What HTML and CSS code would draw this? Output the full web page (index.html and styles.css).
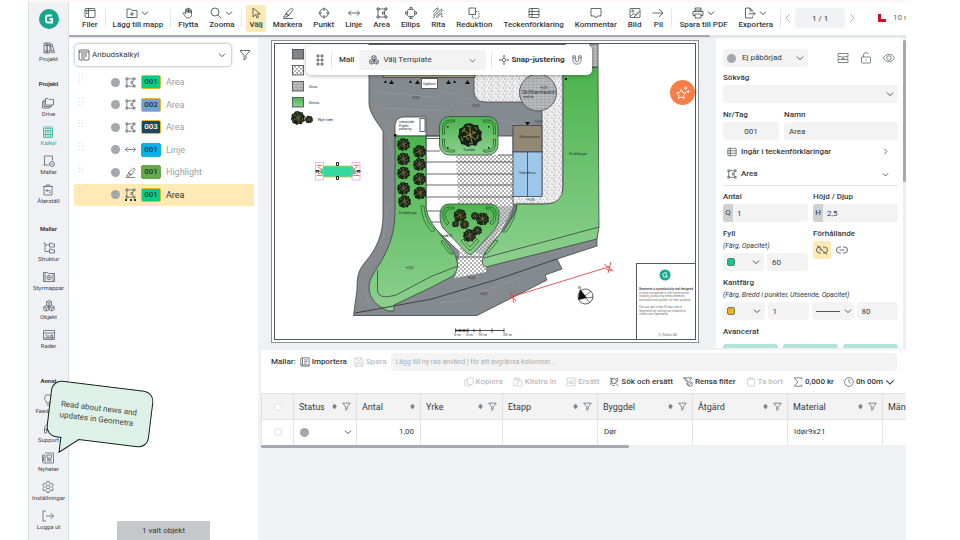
FILE: index.html
```html
<!DOCTYPE html>
<html lang="sv">
<head>
<meta charset="utf-8">
<meta name="viewport" content="width=device-width, initial-scale=1">
<title>Geometra – Anbudskalkyl</title>
<link rel="stylesheet" href="styles.css">
</head>
<body>
<svg class="sprite" aria-hidden="true">
  <symbol id="i-chev" viewBox="0 0 12 12"><path d="M1.500 4 6 8.500 10.500 4"/></symbol>
  <symbol id="i-right" viewBox="0 0 12 12"><path d="M4 1.500 8.500 6 4 10.500"/></symbol>
  <symbol id="i-left" viewBox="0 0 12 12"><path d="M8 1.500 3.500 6 8 10.500"/></symbol>
  <symbol id="i-filer" viewBox="0 0 24 24"><rect x="2" y="3" width="20" height="18" rx="2"/><path d="M9 3v18M2 7h20M4 10h3M4 13h3"/></symbol>
  <symbol id="i-addfolder" viewBox="0 0 24 24"><path d="M2 21V4h7l3 3h10v14zM12 10v8M8 14h8"/></symbol>
  <symbol id="i-hand" viewBox="0 0 24 24"><path d="M7 13V5.500a1.500 1.500 0 0 1 3 0V11 3.500a1.500 1.500 0 0 1 3 0V11 4.500a1.500 1.500 0 0 1 3 0V12 7a1.500 1.500 0 0 1 3 0v8c0 4-2.500 7-6.500 7S7 20 5.500 17.500L2.500 13c-.5-2 1.500-2.500 2.500-1.500z"/></symbol>
  <symbol id="i-search" viewBox="0 0 24 24"><circle cx="10" cy="10" r="8"/><path d="m16 16 7 7"/></symbol>
  <symbol id="i-cursor" viewBox="0 0 24 24"><path d="M6 2v18l5-5 3 7 3-1.500-3-6.500h6.500z"/></symbol>
  <symbol id="i-marker" viewBox="0 0 24 24"><path d="M9 16 8 12 19 2l3 3-8 12-4-1zM8 12l6 5M8 14l-5 6h7l2-3M2 23h20"/></symbol>
  <symbol id="i-target" viewBox="0 0 24 24"><circle cx="12" cy="12" r="8.500"/><path d="M12 1v7M12 16v7M1 12h7M16 12h7"/></symbol>
  <symbol id="i-line" viewBox="0 0 24 24"><path d="M1 12h22M6 7l-5 5 5 5M18 7l5 5-5 5"/></symbol>
  <symbol id="i-area" viewBox="0 0 24 24"><path d="M2 2h4v4H2zM18 2h4v4h-4zM2 18h4v4H2zM18 18h4v4h-4zM13 10h4v4h-4zM6 4h12M4 6v12M6 20h12M19 6l-3 4M16 14l3 4"/></symbol>
  <symbol id="i-ellipse" viewBox="0 0 24 24"><circle cx="12" cy="12" r="8.500"/><path class="knob" d="M10 1h4v4h-4zM10 19h4v4h-4zM1 10h4v4H1zM19 10h4v4h-4z"/></symbol>
  <symbol id="i-draw" viewBox="0 0 24 24"><path d="M2 10C8 3 13-1 12 4S2 14 4 17 18 1 20 5 8 17 9 20s6-4 8-6 4-2 3 1-2 5 2 5M2 22l4-3"/></symbol>
  <symbol id="i-reduce" viewBox="0 0 24 24"><path d="M2 2h13v13H2z"/><path stroke-dasharray="3 2" d="M15 9h7v13H9v-7"/></symbol>
  <symbol id="i-table" viewBox="0 0 24 24"><rect x="2" y="3" width="20" height="18" rx="2"/><path d="M2 9h20M2 15h20M8 3v18"/></symbol>
  <symbol id="i-comment" viewBox="0 0 24 24"><path d="M2 3h20v15h-7l-3 4-3-4H2z"/></symbol>
  <symbol id="i-image" viewBox="0 0 24 24"><rect x="2" y="3" width="20" height="18" rx="1"/><circle cx="7.500" cy="8" r="2"/><path d="m3 19 6-6 4 3 8-8M10 20l9-8"/></symbol>
  <symbol id="i-arrow" viewBox="0 0 24 24"><path d="M1 12h21M14 4l8 8-8 8"/></symbol>
  <symbol id="i-print" viewBox="0 0 24 24"><path d="M6 9V2h12v7M6 17H2V9h20v8h-4M6 14h12v8H6zM6 6h12"/></symbol>
  <symbol id="i-export" viewBox="0 0 24 24"><path d="M17 8V7l-5-5H3v20h14v-3M12 2v6h5M9 13.500h13M18 9.500l4 4-4 4"/></symbol>
  <symbol id="i-books" viewBox="0 0 24 24"><path d="M2 2h6v20H2zM8 2h6v20H8zM14 5l4-1 5 17-5 1zM2 7h12M4 4.500h2M10 4.500h2M2 18h12M15 9l4-1M17.500 18l4-1"/></symbol>
  <symbol id="i-drive" viewBox="0 0 24 24"><path d="M7 3h5l2 2h9v11H7zM7 6H4v13h15v-3M4 9H1v13h15v-3"/></symbol>
  <symbol id="i-calc" viewBox="0 0 24 24"><rect x="3" y="2" width="18" height="21" rx="1"/><path d="M6 5h12v4H6zM3 12h18M7 14v8M12 14v8M17 14v8M4 17h16"/></symbol>
  <symbol id="i-mall" viewBox="0 0 24 24"><path d="M12 20H1M3 20V2h16v9"/><circle cx="18" cy="18" r="5"/><path d="M15 18h6"/></symbol>
  <symbol id="i-restore" viewBox="0 0 24 24"><path d="M2 5h20M8 5V2h8v3M4 5v17h16V5M8 13h6a2.500 2.500 0 0 1 0 5M11 10l-3 3 3 3"/></symbol>
  <symbol id="i-tree" viewBox="0 0 24 24"><path d="M1 2h3v17h9M4 6h9M13 2h4l1 2h5v6H13zM13 14h4l1 2h5v6H13z"/></symbol>
  <symbol id="i-gearfolder" viewBox="0 0 24 24"><path d="M1 21V3h8l2 2h12v16zM4 3v18M20 5v16"/><circle cx="12" cy="13" r="4.500"/><circle cx="12" cy="13" r="1.500"/></symbol>
  <symbol id="i-cubes" viewBox="0 0 24 24"><path d="m12 1 5 2.500v6L12 12 7 9.500v-6zM6.500 11l5 2.500v6l-5 2.500-5-2.500v-6zM17.500 11l5 2.500v6l-5 2.500-5-2.500v-6zM7 3.500 12 6l5-2.500M12 6v6M1.500 13.500l5 2.500 5-2.500M6.500 16v6M12.500 13.500l5 2.500 5-2.500M17.500 16v6"/></symbol>
  <symbol id="i-rows" viewBox="0 0 24 24"><rect x="1" y="3" width="22" height="18" rx="1"/><path d="M1 8h22M5 12h3v6M12 12v6M16 12h3v6h-3zM1 18h22"/></symbol>
  <symbol id="i-bulb" viewBox="0 0 24 24"><path d="M9 18c0-4-4-5-4-10a7 7 0 0 1 14 0c0 5-4 6-4 10zM9 22h6"/></symbol>
  <symbol id="i-headset" viewBox="0 0 24 24"><path d="M3 15v-4a9 9 0 0 1 18 0v4M3 12h4v8H3zM17 12h4v8h-4z"/></symbol>
  <symbol id="i-news" viewBox="0 0 24 24"><path d="M6 2h17v20H4a3 3 0 0 1-3-3V6h5v14M10 6h9v6h-9zM10 15h9M10 18h9M3 9v9"/></symbol>
  <symbol id="i-gear" viewBox="0 0 24 24"><path d="m10 1-.8 3.200-2.700 1.500L3.400 4.800l-2 3.500L3.700 10.600v3L1.400 15.900l2 3.500 3.100-.9 2.700 1.500L10 23h4l.8-3 2.700-1.500 3.100.9 2-3.500-2.300-2.300v-3l2.300-2.300-2-3.500-3.100.9-2.700-1.500L14 1z"/><circle cx="12" cy="12" r="4"/></symbol>
  <symbol id="i-logout" viewBox="0 0 24 24"><path d="M8 2H2v20h6M8 12h15M17 6l6 6-6 6"/></symbol>
  <symbol id="i-sheet" viewBox="0 0 24 24"><rect x="2" y="2" width="20" height="20" rx="2"/><path d="M2 6h20M6 10h12M6 14h12M6 18h8"/></symbol>
  <symbol id="i-funnel" viewBox="0 0 24 24"><path d="M2 3h20l-8 10v6l-4 3v-9z"/></symbol>
  <symbol id="i-snap" viewBox="0 0 24 24"><circle cx="12" cy="12" r="4"/><path d="M12 1v7M12 16v7M1 12h7M16 12h7M9.500 3.500 12 1l2.500 2.500M9.500 20.500 12 23l2.500-2.500M3.500 9.500 1 12l2.500 2.500M20.500 9.500 23 12l-2.500 2.500"/></symbol>
  <symbol id="i-magnet" viewBox="0 0 24 24"><path d="M2 2h6v10a4 4 0 0 0 8 0V2h6v10a10 10 0 0 1-20 0zM2 7h6M16 7h6"/></symbol>
  <symbol id="i-star" viewBox="0 0 24 24"><path d="m10 7 2.300 5 5.200.7-3.900 3.700 1 5.400L10 19.200l-4.600 2.600 1-5.400-3.900-3.700 5.200-.7zM17 2v6M14 5h6M21 8v5M18.500 10.500h5"/></symbol>
  <symbol id="i-split" viewBox="0 0 24 24"><path d="M6 9H2V3h20v6h-4M6 15H2v6h20v-6h-4M1 12h4M8 12h8M19 12h4M12 8v8M6 9h3M15 9h3M6 15h12"/></symbol>
  <symbol id="i-lock" viewBox="0 0 24 24"><rect x="3" y="10" width="18" height="12" rx="1"/><path d="M7 10V6a5 5 0 0 1 9.500-2M12 15v3"/></symbol>
  <symbol id="i-eye" viewBox="0 0 24 24"><path d="M1 12C6 2 18 2 23 12 18 22 6 22 1 12z"/><circle cx="12" cy="12" r="4.500"/></symbol>
  <symbol id="i-link" viewBox="0 0 24 24"><path d="M10 6H7a6 6 0 0 0 0 12h3M14 6h3a6 6 0 0 1 0 12h-3M7 12h10"/></symbol>
  <symbol id="i-unlink" viewBox="0 0 24 24"><path d="M10 6H7a6 6 0 0 0 0 12h3M14 6h3a6 6 0 0 1 0 12h-3M2 3l20 18M7 12h4"/></symbol>
  <symbol id="i-book" viewBox="0 0 24 24"><path d="M4 2h18v20H4a3 3 0 0 1-2-3V4a2 2 0 0 1 2-2zM6 2v17M2 19h20M10 7h8M10 11h8M10 15h5"/></symbol>
  <symbol id="i-save" viewBox="0 0 24 24"><path d="M2 2h16l4 4v16H2zM7 2v6h9V2M6 22v-9h12v9M9 17h6"/></symbol>
  <symbol id="i-copy" viewBox="0 0 24 24"><rect x="8" y="2" width="14" height="16" rx="3"/><path d="M8 6H5a3 3 0 0 0-3 3v10a3 3 0 0 0 3 3h8a3 3 0 0 0 3-3v-1"/></symbol>
  <symbol id="i-paste" viewBox="0 0 24 24"><path d="M9 21H2V4h4M13 4h4v4M6 2h7v4H6z"/><rect x="10" y="9" width="12" height="13" rx="1"/></symbol>
  <symbol id="i-swap" viewBox="0 0 24 24"><path d="M5 3v14H2M17 3h4v9"/><circle cx="12" cy="10" r="6"/><path d="m16 15 7 7M2 3h8M7 20h7"/></symbol>
  <symbol id="i-clearf" viewBox="0 0 24 24"><path d="M10 20v-8L1 2h20l-6 7M4 2l8 8"/><circle cx="17" cy="17" r="5.500"/><path d="m13 21 8-8"/></symbol>
  <symbol id="i-trash" viewBox="0 0 24 24"><path d="M2 5h20M8 5V2h8v3M4 5v17h16V5"/></symbol>
  <symbol id="i-sum" viewBox="0 0 24 24"><path d="M21 6V2H3l9 10L3 22h18v-4"/></symbol>
  <symbol id="i-clock" viewBox="0 0 24 24"><circle cx="12" cy="12" r="10.500"/><path d="M12 5v7l4 3"/></symbol>
  <symbol id="i-sort" viewBox="0 0 12 12"><path class="solid" d="M6 0l4 5v2L6 12 2 7V5z"/></symbol>
  <symbol id="tree" viewBox="-12 -12 24 24">
    <path fill="#182019" d="M0-12 4-10 8-10 9-6 12-3 11 1 12 5 8 7 6 11 2 10-2 12-5 10-9 9-10 5-12 2-11-2-11-6-7-8-5-11z"/>
    <path fill="none" stroke="#4f8a3c" stroke-width="1.300" d="M-8-3l3-4M-3-9l4 1M5-8l2 3M8 0l-1 4M3 8l-4 1M-7 6l-2-4M-4 2l3 3M2-4l3 2"/>
    <path fill="none" stroke="#a78a3c" stroke-width="1" d="M0 0-6-5M0 0l6-3M0 0l2 7M0 0l-7 2M0 0v-7M0 0l6 5"/>
  </symbol>
</svg>

<div class="app">
  <nav class="side" aria-label="Huvudmeny">
    <a class="brand" href="#" aria-label="Geometra"><svg viewBox="0 0 20 20"><circle cx="10" cy="10" r="10"/><path d="M13 6.500H9A2 2 0 0 0 7 8.500v3a2 2 0 0 0 2 2h4V10H10.500"/></svg></a>
    <a class="nav" href="#"><svg><use href="#i-books"/></svg>Projekt</a>
    <h2>Projekt</h2>
    <a class="nav" href="#"><svg><use href="#i-drive"/></svg>Drive</a>
    <a class="nav on" href="#"><svg><use href="#i-calc"/></svg>Kalkyl</a>
    <a class="nav" href="#"><svg><use href="#i-mall"/></svg>Mallar</a>
    <a class="nav" href="#"><svg><use href="#i-restore"/></svg>Återställ</a>
    <h2 class="mid">Mallar</h2>
    <a class="nav" href="#"><svg><use href="#i-tree"/></svg>Struktur</a>
    <a class="nav" href="#"><svg><use href="#i-gearfolder"/></svg>Styrmappar</a>
    <a class="nav" href="#"><svg><use href="#i-cubes"/></svg>Objekt</a>
    <a class="nav" href="#"><svg><use href="#i-rows"/></svg>Rader</a>
    <h2 class="far">Annat</h2>
    <a class="nav" href="#"><svg><use href="#i-bulb"/></svg>Feedback</a>
    <a class="nav" href="#"><svg><use href="#i-headset"/></svg>Support</a>
    <a class="nav" href="#"><svg><use href="#i-news"/></svg>Nyheter</a>
    <a class="nav" href="#"><svg><use href="#i-gear"/></svg>Inställningar</a>
    <a class="nav" href="#"><svg><use href="#i-logout"/></svg>Logga ut</a>
    <div class="bubble">
      <svg viewBox="0 0 104 74"><path d="M11 1H93a10 10 0 0 1 10 10V47a10 10 0 0 1-10 10H34L16 72V57H11A10 10 0 0 1 1 47V11A10 10 0 0 1 11 1z"/></svg>
      <p>Read about news and updates in Geometra</p>
    </div>
  </nav>

  <div class="main">
    <header class="tools">
      <button class="tool"><span><svg><use href="#i-filer"/></svg></span>Filer</button>
      <i class="sep"></i>
      <button class="tool"><span><svg><use href="#i-addfolder"/></svg><svg class="chev"><use href="#i-chev"/></svg></span>Lägg till mapp</button>
      <i class="sep"></i>
      <button class="tool"><span><svg><use href="#i-hand"/></svg></span>Flytta</button>
      <button class="tool"><span><svg><use href="#i-search"/></svg><svg class="chev"><use href="#i-chev"/></svg></span>Zooma</button>
      <i class="sep"></i>
      <button class="tool picked"><span><svg><use href="#i-cursor"/></svg></span>Välj</button>
      <button class="tool"><span><svg><use href="#i-marker"/></svg></span>Markera</button>
      <button class="tool"><span><svg><use href="#i-target"/></svg></span>Punkt</button>
      <button class="tool"><span><svg><use href="#i-line"/></svg></span>Linje</button>
      <button class="tool"><span><svg><use href="#i-area"/></svg></span>Area</button>
      <button class="tool"><span><svg><use href="#i-ellipse"/></svg></span>Ellips</button>
      <button class="tool"><span><svg><use href="#i-draw"/></svg></span>Rita</button>
      <button class="tool"><span><svg><use href="#i-reduce"/></svg></span>Reduktion</button>
      <button class="tool"><span><svg><use href="#i-table"/></svg></span>Teckenförklaring</button>
      <button class="tool"><span><svg><use href="#i-comment"/></svg></span>Kommentar</button>
      <button class="tool"><span><svg><use href="#i-image"/></svg></span>Bild</button>
      <button class="tool"><span><svg><use href="#i-arrow"/></svg></span>Pil</button>
      <i class="sep"></i>
      <button class="tool"><span><svg><use href="#i-print"/></svg><svg class="chev"><use href="#i-chev"/></svg></span>Spara till PDF</button>
      <button class="tool"><span><svg><use href="#i-export"/></svg><svg class="chev"><use href="#i-chev"/></svg></span>Exportera</button>
      <i class="sep"></i>
      <div class="pager">
        <button aria-label="Föregående sida"><svg><use href="#i-left"/></svg></button>
        <input aria-label="Sida" value="1 / 1">
        <button aria-label="Nästa sida"><svg><use href="#i-right"/></svg></button>
      </div>
      <div class="scale"><svg viewBox="0 0 8 8"><path d="M0 0h3v5h5v3H0z"/></svg><span>10 m</span></div>
    </header>
    <div class="hscroll"><i></i></div>

    <div class="body">
      <aside class="list">
        <div class="pick">
          <label class="field card"><svg><use href="#i-sheet"/></svg><select aria-label="Kalkyl"><option>Anbudskalkyl</option></select><svg class="chev"><use href="#i-chev"/></svg></label>
          <button aria-label="Filtrera"><svg><use href="#i-funnel"/></svg></button>
        </div>
        <ul>
          <li><i class="grip"></i><i class="dot"></i><svg><use href="#i-area"/></svg><b class="tag green">001</b>Area</li>
          <li><i class="grip"></i><i class="dot"></i><svg><use href="#i-area"/></svg><b class="tag blue">002</b>Area</li>
          <li><i class="grip"></i><i class="dot"></i><svg><use href="#i-area"/></svg><b class="tag dark">003</b>Area</li>
          <li><i class="grip"></i><i class="dot"></i><svg><use href="#i-line"/></svg><b class="tag cyan">001</b>Linje</li>
          <li><i class="grip"></i><i class="dot"></i><svg><use href="#i-marker"/></svg><b class="tag leaf">001</b>Highlight</li>
          <li class="sel"><i class="grip"></i><i class="dot"></i><span class="multi"><svg><use href="#i-area"/></svg></span><b class="tag green">001</b>Area</li>
        </ul>
        <p class="count">1 valt objekt</p>
      </aside>

      <div class="right">
        <div class="work">
          <section class="canvas" aria-label="Ritning">
            <svg class="plan" viewBox="271 40 428 303">
              <defs>
                <linearGradient id="gr" x1="0" y1="0" x2="0" y2="1"><stop offset="0" stop-color="#4bb44d"/><stop offset="1" stop-color="#8dd08f"/></linearGradient>
                <pattern id="pave" width="7" height="6" patternUnits="userSpaceOnUse"><rect width="7" height="6" fill="#f0f0f0"/><path d="M0 1h2M4 1v1M2 3h1M5 4h2M1 5h1" stroke="#888" stroke-width=".6"/></pattern>
                <pattern id="dots" width="4" height="4" patternUnits="userSpaceOnUse"><rect width="4" height="4" fill="#fff"/><path d="M0 1h2M2 3h2" stroke="#555" stroke-width=".9"/></pattern>
                <pattern id="hatch" width="4" height="3" patternUnits="userSpaceOnUse"><rect width="4" height="3" fill="#b9bbbc"/><path d="M0 .5h4M1 0v3" stroke="#8f9294" stroke-width=".4"/></pattern>
              </defs>
              <rect x="271" y="40" width="428" height="303" fill="#fff"/>
              <rect x="271.500" y="40.500" width="427" height="302" fill="none" stroke="#8d9093"/>
              <rect x="274.500" y="43.500" width="421" height="296" fill="none" stroke="#555a5e"/>
              <g stroke="#3d4246" stroke-width=".8">
                <path fill="#858a8f" d="M369 44V104C370 114 377 122 383 131V216C383 236 375 250 367 260C358 270 357 276 357 290L353.500 315.500H477L547 280 545 275 562 269 557 259 597 246 596 150 565 44z"/>
                <path stroke="#9da1a5" stroke-width=".5" fill="none" d="M375 92l60 5M380 108l70 3M440 90l30 9M386 124l8 40M388 205l-6 40M365 285l4 22M440 303l30-3M480 292l40-14M500 120l30 8M500 140l12 4"/>
                <path fill="#fff" d="M426 136H513V205L470 262 426 220z"/>
                <path fill="url(#dots)" stroke="none" d="M456 155H513V206L486 262V272L455 278 460 250z"/>
                <path fill="#8b8e91" fill-opacity=".45" stroke="none" d="M499 206H514L484 256 474 252 498 226z"/>
                <path fill="none" d="M426 136H440M426 138.500H440M426 151H440M426 162H513M426 174H513M426 185H513M426 197H513M426 211H441M427 222H442M440 236H448M455 257H486M498 155H513"/>
                <path fill="url(#pave)" d="M474 74V92Q475 102 485 102H542V196H513V204H553Q563 202 563 190V74z"/>
                <path fill="#b9ad7f" d="M383 75H475V77.500H383z"/>
                <path fill="url(#gr)" d="M563 67H598L599 227 597 239 486 267C480 265 482 258 487 250L506 226Q516 214 517 204H545Q563 204 563 187z"/>
                <path fill="none" d="M484 258 599 227"/>
                <rect x="590" y="44" width="8" height="23" fill="url(#hatch)"/>
                <path fill="#fff" d="M395 136V125Q396 117 404 117H426V136z"/>
                <rect x="420" y="118.500" width="5" height="13" fill="#fff"/>
                <path fill="url(#gr)" d="M395 136H426V205C426 218 436 229 447 243C456 253 459 264 457 269Q455 276 449 278L432 287 394 305V311H388C378 306 369 300 369 287C369 276 380 266 386 252Q395 234 395 212z"/>
                <path fill="none" d="M377.500 270V290C378 299 388 297 396 295L432 276 458 266"/>
                <path fill="none" stroke-width="1" d="M355 313 432 299 495 280 557 259"/>
                <rect x="439.500" y="116.500" width="58.500" height="38.500" rx="10" fill="url(#gr)"/>
                <path fill="url(#gr)" d="M448 204H491Q500 205 499 216 499 224 495 229L474 252Q470 257 466 252L443 228Q440 224 440 215 440 205 448 204z"/>
                <g fill="none" stroke="#28632b">
                  <path d="M442.500 134v-6q0-8 8-8h4v2h-4q-6 0-6 6v6zM442.500 139v5q0 8 8 8h4v-2h-4q-6 0-6-6v-5zM495.500 134v-6q0-8-8-8h-4v2h4q6 0 6 6v6zM495.500 139v5q0 8-8 8h-4v-2h4q6 0 6-6v-5z"/>
                  <path d="M454 207h-6q-6 1-5 9 0 5 4 9l2-2q-4-4-4-8 0-5 4-6h5zM486 207h5q6 1 5 9 0 5-4 9l-2-2q4-4 4-8 0-5-4-6h-4zM461 241l9 10 9-10-2-2-7 8-7-8z"/>
                  <path d="M421 206h3q1 15 11 24l-3 2q-10-10-11-26zM442 240l11 14h-3l-9-12zM517 206q-2 14-11 26h-3q9-12 11-26zM498 241l-11 13h-3l11-14z"/>
                </g>
                <rect x="513" y="125.500" width="29" height="26.500" fill="#928874"/>
                <path fill="#9ec8ea" d="M513 152h29v44.500h-29zM527.500 152v44.500"/>
                <circle cx="538" cy="92.500" r="18.500" fill="url(#hatch)"/>
                <rect x="421.500" y="78.500" width="16" height="10" fill="#fff"/>
              </g>
              <path fill="#111" d="m389 84 2.500-4 2.500 4zM384 83l1.500-3 1.500 3zM409 83l1.500-3 1.500 3zM415 84l2.500-4 2.500 4zM446 84l2.500-4 2.500 4zM453 83l1.500-3 1.500 3zM465 84l2.500-4 2.500 4zM525 122h5l-2.500 3.500zM565 80h2v-2h-2zM447 126h1.500v1.500H447zM488 126h1.500v1.500H488zM447 147h1.500v1.500H447zM488 147h1.500v1.500H488zM394 134h2.500v2.500H394z"/>
              <g stroke="#3d4246" stroke-width=".8">
                <rect x="292.500" y="49.500" width="11" height="9.500" fill="#80868b"/><rect x="292.500" y="65.500" width="11" height="9.500" fill="url(#dots)"/><rect x="292.500" y="81.500" width="11" height="9.500" fill="url(#hatch)"/><rect x="292.500" y="97.500" width="11" height="9.500" fill="url(#gr)"/>
              </g>
              <use href="#tree" x="291" y="111" width="14" height="14"/><use href="#tree" x="305" y="115.500" width="8" height="8"/>
              <use href="#tree" x="458" y="123" width="24" height="24"/>
              <use href="#tree" x="397" y="138" width="13" height="13"/><use href="#tree" x="413" y="145" width="13" height="13"/>
              <use href="#tree" x="397" y="152.500" width="13" height="13"/><use href="#tree" x="413" y="158" width="13" height="13"/>
              <use href="#tree" x="397" y="166.500" width="13" height="13"/><use href="#tree" x="413" y="172.500" width="13" height="13"/>
              <use href="#tree" x="397" y="182" width="13" height="13"/><use href="#tree" x="413.500" y="186.500" width="13" height="13"/>
              <use href="#tree" x="398" y="195" width="13" height="13"/>
              <use href="#tree" x="453.500" y="209" width="13" height="13"/><use href="#tree" x="476" y="212.500" width="13" height="13"/><use href="#tree" x="471" y="212" width="8" height="8"/><use href="#tree" x="452" y="220.500" width="7" height="7"/><use href="#tree" x="460" y="220" width="9" height="9"/><use href="#tree" x="463" y="229" width="13" height="13"/><use href="#tree" x="473" y="226" width="9" height="9"/>
              <g class="cap">
                <text x="309" y="87.500">Grus</text><text x="309" y="103.500">Gress</text><text x="318" y="121">Nye trær</text>
                <text x="399" y="214">Frukthage</text><text x="569" y="154.500">Frukthage</text><text x="463" y="150.500">Tunløe</text>
                <text x="519" y="138">Arbeidsrom</text><text x="519" y="174">Veksthus</text>
                <text class="big" x="522" y="94">Skifthermaskin</text><text x="423" y="85">Sjøbod</text>
                <text class="tiny" x="399" y="123">uteområder</text><text class="tiny" x="399" y="126.500">Projekt</text><text class="tiny" x="399" y="130">parkering</text>
                <text class="tiny" x="412" y="98.500">+0,00</text><text class="tiny" x="472" y="107">+0,00</text><text class="tiny" x="406" y="269">+0,00</text><text class="tiny" x="468" y="278.500">+0,05</text><text class="tiny" x="480" y="295">+0,00</text><text class="tiny" x="535" y="123">+0,00</text><text class="tiny" x="527" y="201">+0,05</text><text class="tiny" x="445" y="237">+0,05</text><text class="tiny" x="540" y="89">+0,00</text><text class="tiny" x="523" y="98">med tak</text>
              </g>
              <path fill="#35d8a1" stroke="#c8c64a" stroke-width=".8" d="M324 166h28l4 5.500-4 5.500h-28l-4-5.500z"/>
              <path fill="none" stroke="#f28af0" stroke-width=".7" d="M315.500 162.500h8v17.500h-8zM352 162.500h8v17.500h-8z"/>
              <path fill="none" stroke="#f05a6a" stroke-width=".9" d="M317 165.500h5M317 175.500h5M354 165.500h5M354 175.500h5M318 167l4 3M357 167l-4 3M318 174l4-2M357 174l-4-2"/>
              <path fill="#fff" stroke="#222" stroke-width="1" d="M336.500 162.500h2v3h-2zM336.500 176.500h2v3h-2zM316 170.500h3v1.500h-3zM357 170.500h3v1.500h-3z"/>
              <path fill="none" stroke="#e0484c" stroke-width=".9" d="M511 297 610 266.500M509 292l7 9M517 294l-9 6M511 292l3 11M604 264l8 6M611 262l-3 11M613 271l-7-2"/>
              <circle cx="585.500" cy="296.500" r="7.500" fill="#fff" stroke="#333" stroke-width=".8"/><path fill="#111" d="m580 289 7 9-9 2z"/><path fill="none" stroke="#333" stroke-width=".7" d="M585 296l6-5M585 297l5 6M587 298l6-1"/><text class="lbl" x="578" y="289">N</text>
              <path fill="none" stroke="#222" stroke-width=".8" d="M455.500 330.500H504M455.500 328.500v4M460 329v3M464 329v3M468 328.500v4M474 329v3M480 328.500v4M492 328.500v4M504 328.500v4"/><path stroke="#222" stroke-width="1.500" d="M456 330.500h12"/>
              <g class="lbl"><text x="454" y="335.500">0 m</text><text x="466" y="335.500">5 m</text><text x="478" y="335.500">10 m</text><text x="503" y="335.500">20 m</text></g>
              <rect x="636.500" y="263.500" width="59" height="76" fill="#fff" stroke="#555a5e"/>
              <circle cx="665" cy="275" r="5.500" fill="#15a88a"/><path fill="none" stroke="#fff" stroke-width="1" d="M667 273h-2.500q-1.500 0-1.500 1.500v1q0 1.500 1.500 1.500h2.500v-2h-1.500"/>
              <g class="info"><text class="strong" x="639" y="289.500">Geometra is a productivity tool designed</text><text x="639" y="293.500">to help companies in the construction</text><text x="639" y="297">industry producing measurements,</text><text x="639" y="300.500">estimates and quotes for their projects.</text><text x="639" y="307.500">You can get a free 30-day trial of</text><text x="639" y="311.500">Geometra by visiting our website at</text><text x="639" y="315">rukkor.com/geometra</text><text x="658" y="336">(C) Rukkor AB</text></g>
            </svg>
            <div class="float">
              <i class="grip dark"></i><i class="sep"></i>
              <span>Mall</span>
              <label class="field tmpl"><svg><use href="#i-cubes"/></svg><select aria-label="Mall"><option>Välj Template</option></select><svg class="chev"><use href="#i-chev"/></svg></label>
              <i class="sep"></i>
              <button class="snap"><svg><use href="#i-snap"/></svg>Snap-justering</button>
              <button aria-label="Magnet"><svg><use href="#i-magnet"/></svg></button>
            </div>
            <button class="spark" aria-label="Nyheter"><svg><use href="#i-star"/></svg></button>
          </section>

          <aside class="props">
            <div class="row head">
              <label class="field half"><i class="dot"></i><select aria-label="Status"><option>Ej påbörjad</option></select><svg class="chev"><use href="#i-chev"/></svg></label>
              <span class="acts"><button aria-label="Dela"><svg><use href="#i-split"/></svg></button><button aria-label="Lås"><svg><use href="#i-lock"/></svg></button><button aria-label="Visa"><svg><use href="#i-eye"/></svg></button></span>
            </div>
            <div class="group"><label for="path">Sökväg</label>
              <span class="field"><select id="path"><option></option></select><svg class="chev"><use href="#i-chev"/></svg></span></div>
            <div class="row nr">
              <div class="group"><label for="nr">Nr/Tag</label><input class="mid" id="nr" value="001"></div>
              <div class="group"><label for="nm">Namn</label><input id="nm" value="Area"></div>
            </div>
            <button class="fold"><svg><use href="#i-table"/></svg><span>Ingår i teckenförklaringar</span><svg class="chev"><use href="#i-right"/></svg></button>
            <button class="fold open"><svg><use href="#i-area"/></svg><span>Area</span><svg class="chev"><use href="#i-chev"/></svg></button>
            <div class="row two">
              <div class="group"><label for="qty">Antal</label><span class="unit"><b>Q</b><input id="qty" value="1"></span></div>
              <div class="group"><label for="hgt">Höjd / Djup</label><span class="unit"><b>H</b><input id="hgt" value="2,5"></span></div>
            </div>
            <div class="row two">
              <div class="group"><label for="fc">Fyll</label><em>(Färg, Opacitet)</em>
                <div class="row two tight"><span class="field"><i class="sw green"></i><select id="fc"><option></option></select><svg class="chev"><use href="#i-chev"/></svg></span><input aria-label="Opacitet" value="60"></div></div>
              <div class="group"><label for="unlink">Förhållande</label><span class="links"><button id="unlink" class="on" aria-label="Olänkad"><svg><use href="#i-unlink"/></svg></button><button aria-label="Länkad"><svg><use href="#i-link"/></svg></button></span></div>
            </div>
            <div class="group"><label for="bc">Kantfärg</label><em>(Färg, Bredd i punkter, Utseende, Opacitet)</em>
              <div class="row four"><span class="field"><i class="sw amber"></i><select id="bc"><option></option></select><svg class="chev"><use href="#i-chev"/></svg></span><input aria-label="Bredd" value="1"><span class="field stroke"><i></i><select aria-label="Utseende"><option></option></select><svg class="chev"><use href="#i-chev"/></svg></span><input aria-label="Kantopacitet" value="80"></div></div>
            <div class="group adv"><label for="adv">Avancerat</label><div class="row three"><button id="adv" aria-label="Avancerat 1"></button><button aria-label="Avancerat 2"></button><button aria-label="Avancerat 3"></button></div></div>
          </aside>
          <div class="vscroll"><i></i></div>
        </div>

        <section class="sheet">
          <div class="bar"><strong>Mallar:</strong><button><svg><use href="#i-book"/></svg>Importera</button><button class="off" disabled><svg><use href="#i-save"/></svg>Spara</button><input aria-label="Ny rad" placeholder="Lägg till ny rad använd | för att avgränsa kolumner..."></div>
          <div class="bar acts2">
            <button class="off" disabled><svg><use href="#i-copy"/></svg>Kopiera</button><button class="off" disabled><svg><use href="#i-paste"/></svg>Klistra in</button><button class="off" disabled><svg><use href="#i-split"/></svg>Ersätt</button><button><svg><use href="#i-swap"/></svg>Sök och ersätt</button><button><svg><use href="#i-clearf"/></svg>Rensa filter</button><button class="off" disabled><svg><use href="#i-trash"/></svg>Ta bort</button><button><svg><use href="#i-sum"/></svg>0,000 kr</button><button><svg><use href="#i-clock"/></svg>0h 00m<svg class="chev"><use href="#i-chev"/></svg></button>
          </div>
          <div class="tablewrap">
            <table>
              <colgroup><col class="c32"><col class="c63"><col class="c64"><col class="c82"><col class="c95"><col class="c95"><col class="c95"><col class="c95"><col class="c95"></colgroup>
              <thead><tr>
                <th><input type="radio" name="r" aria-label="Alla"></th>
                <th><div>Status<svg class="sort"><use href="#i-sort"/></svg><svg><use href="#i-funnel"/></svg></div></th>
                <th><div>Antal<svg class="sort"><use href="#i-sort"/></svg></div></th>
                <th><div>Yrke<svg class="sort"><use href="#i-sort"/></svg><svg><use href="#i-funnel"/></svg></div></th>
                <th><div>Etapp<svg class="sort"><use href="#i-sort"/></svg><svg><use href="#i-funnel"/></svg></div></th>
                <th><div>Byggdel<svg class="sort"><use href="#i-sort"/></svg><svg><use href="#i-funnel"/></svg></div></th>
                <th><div>Åtgärd<svg class="sort"><use href="#i-sort"/></svg><svg><use href="#i-funnel"/></svg></div></th>
                <th><div>Material<svg class="sort"><use href="#i-sort"/></svg><svg><use href="#i-funnel"/></svg></div></th>
                <th><div>Män</div></th>
              </tr></thead>
              <tbody><tr>
                <td><input type="radio" name="r" aria-label="Rad 1"></td>
                <td><div class="stat"><i class="dot"></i><svg class="chev"><use href="#i-chev"/></svg></div></td>
                <td class="num">1,00</td><td></td><td></td><td>Dør</td><td></td><td>Idør9x21</td><td></td>
              </tr></tbody>
            </table>
          </div>
          <div class="hscroll low"><i></i></div>
        </section>
      </div>
    </div>
  </div>
</div>
</body>
</html>
```
FILE: styles.css
```css
* { box-sizing: border-box; }
html, body { height: 100%; }
body {
  margin: 0;
  padding: 0 54px 0 28px;
  background: #fff;
  color: #33393e;
  font: 400 8px/10px Roboto, "Liberation Sans", sans-serif;
  overflow: hidden;
}
.sprite { position: absolute; width: 0; height: 0; }
svg { fill: none; stroke: currentColor; stroke-width: 1.5; flex: none; width: 12px; height: 12px; display: block; }
svg.chev { width: 8px; height: 8px; stroke-width: 1.3; }
.solid { fill: currentColor; }
.knob { fill: #fff; }
button, input, select { font: inherit; color: inherit; border: 0; background: none; padding: 0; margin: 0; min-width: 0; outline: 0; }
button { display: flex; align-items: center; cursor: pointer; }
select { appearance: none; flex: 1; width: 100%; }
h2, p, ul { margin: 0; padding: 0; }

.app { display: flex; height: 100%; border-top: 2px solid #fdf6f6; }

/* navigation */
.side {
  position: relative;
  z-index: 5;
  width: 41px;
  flex: none;
  background: #eff1f4;
  border: solid #d9dee3;
  border-width: 0 1px;
  display: flex;
  flex-direction: column;
  align-items: center;
  font-size: 6px;
}
.brand { margin: 7px 0 13px; }
.brand svg { width: 20px; height: 20px; stroke: none; }
.brand circle { fill: #17a68c; }
.brand path { stroke: #fff; stroke-width: 2; }
.nav { display: flex; flex-direction: column; align-items: center; margin-bottom: 7px; color: #3f454a; text-decoration: none; white-space: nowrap; }
.nav svg { color: #555b60; stroke-width: 1.5; }
.nav.on, .nav.on svg { color: #22ab90; }
.side h2 { font-size: 6px; line-height: 10px; font-weight: 700; margin: 8px 0; }
.side h2.mid { margin-top: 11px; }
.side h2.far { margin-top: 18px; }

.bubble { position: absolute; left: 19px; top: 383px; width: 104px; height: 58px; transform: rotate(7deg); display: flex; align-items: center; justify-content: center; }
.bubble svg { position: absolute; left: 0; top: 0; width: 104px; height: 74px; fill: #def1e9; stroke: #16201c; stroke-width: 1; }
.bubble p { position: relative; width: 80px; font-size: 8px; line-height: 11px; color: #3c4743; }

.main { flex: 1; min-width: 0; display: flex; flex-direction: column; }

/* toolbar */
.tools { height: 33px; display: flex; align-items: center; gap: 1px; padding: 0 0 1px 8px; overflow: hidden; font-weight: 500; white-space: nowrap; }
.tool { flex: none; flex-direction: column; padding: 2px 5px; font-weight: 500; }
.tool span { display: flex; align-items: center; gap: 3px; height: 13px; }
.tool.picked { background: #ffe9b4; border-radius: 2px; padding: 2px 3px; margin: 0 1px 0 2px; }
.sep { flex: none; width: 1px; height: 18px; background: #e3e5e7; margin: 0 1px; }
.pager { display: flex; align-items: center; gap: 2px; color: #9ba1a6; }
.pager svg { width: 10px; height: 10px; stroke-width: 1; }
.pager input { width: 50px; height: 20px; background: #f1f2f3; border-radius: 3px; text-align: center; color: #5a6065; font-size: 8px; }
.scale { display: flex; align-items: center; gap: 7px; margin-left: 20px; color: #666c70; font-weight: 400; }
.scale svg { width: 8px; height: 8px; fill: #cf1020; stroke: none; }
.hscroll { height: 3px; flex: none; background: #e4e7ea; }
.hscroll i { display: block; width: 641px; max-width: 77%; height: 2px; background: #a3a9ae; border-radius: 2px; }

.body { flex: 1; display: flex; min-height: 0; }

/* object list */
.list { position: relative; width: 190px; flex: none; padding: 5px 0 0 5px; border-right: 1px solid #f2f3f4; }
.pick { display: flex; align-items: center; gap: 7px; }
.field { display: flex; align-items: center; gap: 4px; height: 18px; padding: 0 5px; background: #f3f3f4; border-radius: 3px; }
.field.card { width: 158px; height: 24px; background: #fff; border: 1px solid #d3d6d9; border-radius: 5px; box-shadow: 0 0 3px rgba(0,0,0,.15); padding: 0 5px 0 3px; gap: 2px; }
.list ul { list-style: none; display: grid; grid-auto-rows: 1fr; height: 135px; margin-top: 4px; width: 180px; }
.list li { display: flex; align-items: center; gap: 5px; font-size: 9px; color: #9a9fa3; border-radius: 2px; padding-left: 4px; }
.list li svg { color: #4a5055; width: 11px; height: 11px; }
.list li.sel { background: #ffe9b4; color: #2c3135; }
.multi { border-bottom: 2px dotted #333; }
.dot { width: 9px; height: 9px; border-radius: 50%; background: #a2a8ad; flex: none; }
.grip { width: 6px; height: 9px; flex: none; background: radial-gradient(circle, #c6cacd 1px, transparent 1px) 0 0 / 3px 3px; }
.list .grip { align-self: flex-start; margin: 3px 22px 0 0; opacity: .7; }
.tag { width: 20px; height: 14px; border-radius: 2px; border: 1px solid; font: 500 8px/12px Roboto, sans-serif; text-align: center; color: #1d3b35; }
.tag.green { background: #03cf84; border-color: #e8b52a; }
.tag.blue { background: #6ea2d8; border-color: #e8b52a; }
.tag.dark { background: #1a4a55; border-color: #e8b52a; color: #fff; }
.tag.cyan { background: #0bb0e6; border-color: #0bb0e6; }
.tag.leaf { background: #68a84b; border-color: #68a84b; }
.count { position: absolute; left: 48px; bottom: 0; width: 93px; height: 19px; line-height: 19px; text-align: center; background: #c4c8cb; }

.right { flex: 1; min-width: 0; display: flex; flex-direction: column; background: #eff1f4; padding-left: 2px; }
.work { height: 310px; flex: none; display: flex; }

/* drawing */
.canvas { position: relative; flex: 1; min-width: 0; padding: 2px 17px 5px 10px; }
.plan { width: 100%; height: 100%; stroke-width: 1; stroke: none; }
.plan text { stroke: none; fill: #2d3235; }
.cap text { font-size: 4px; }
.cap .big { font-size: 5px; }
.cap .tiny { font-size: 3px; }
.lbl, .lbl text { font-size: 4px; }
.info text { font-size: 3px; fill: #777; }
.info .strong { fill: #333; font-weight: 500; }
.float { position: absolute; left: 45px; top: 7px; height: 30px; display: flex; align-items: center; gap: 7px; padding: 0 10px; background: #fff; border-radius: 5px; box-shadow: 0 1px 4px rgba(0,0,0,.3); font-weight: 500; white-space: nowrap; }
.float .sep { margin: 0; height: 15px; }
.float svg { width: 10px; height: 10px; }
.float svg.chev { width: 7px; height: 7px; }
.grip.dark { width: 8px; height: 12px; background: radial-gradient(circle, #777 1px, transparent 2px) 0 0 / 4px 4px; }
.tmpl { width: 127px; height: 20px; padding: 0 10px; font-weight: 400; margin: 0 -2px; }
.tmpl select { padding-left: 0; }
.snap { gap: 2px; font-weight: 700; }
.spark { position: absolute; right: 21px; top: 42px; width: 25px; height: 25px; border-radius: 50%; background: #fa7d45; justify-content: center; color: #fff; }
.spark svg { width: 15px; height: 15px; }

/* properties */
.props { width: 187px; flex: none; background: #fff; padding: 11px 5px 0 7px; overflow: hidden; font-size: 8px; }
.row { display: grid; gap: 5px; }
.row.head { display: flex; justify-content: space-between; align-items: center; margin-bottom: 6px; }
.half { width: 85px; }
.half select { padding-left: 2px; }
.acts { display: flex; gap: 11px; padding-right: 3px; color: #5b6166; }
.group { display: flex; flex-direction: column; min-width: 0; margin-bottom: 7px; }
.group label { font-weight: 500; line-height: 10px; margin-bottom: 2px; }
.group em { line-height: 10px; margin: 0 0 2px; font-size: 7px; white-space: nowrap; }
.props input { height: 18px; width: 100%; background: #f3f3f4; border-radius: 3px; padding: 0 5px; }
.props input.mid { text-align: center; }
.props .field { padding: 0 4px; min-width: 0; }
.row.nr { grid-template-columns: 56px 1fr; }
.row.nr .group { margin-bottom: 0; }
.fold { width: 100%; height: 23px; gap: 4px; padding: 0 9px 0 4px; font-weight: 500; text-align: left; }
.fold span { flex: 1; }
.fold svg { width: 10px; height: 10px; }
.fold svg.chev { width: 7px; height: 7px; }
.fold.open { border-bottom: 1px solid #e2e4e6; margin-bottom: 6px; }
.two { grid-template-columns: 1fr 1fr; }
.three { grid-template-columns: 1fr 1fr 1fr; }
.four { grid-template-columns: repeat(4, 1fr); gap: 3px; }
.two.tight { gap: 3px; }
.unit { display: flex; }
.unit b { width: 10px; height: 18px; line-height: 18px; text-align: center; background: #cfd0d1; border-radius: 3px 0 0 3px; font-weight: 400; flex: none; }
.props .unit input { border-radius: 0 3px 3px 0; padding-left: 4px; }
.sw { width: 8px; height: 8px; border-radius: 2px; border: 1px solid #6f757a; flex: none; }
.sw.green { background: #03cf84; }
.sw.amber { background: #f3b10b; }
.stroke i { width: 24px; height: 1px; background: #555; flex: none; }
.props .stroke { gap: 2px; }
.links { display: flex; gap: 2px; }
.links button { width: 18px; height: 18px; justify-content: center; border-radius: 3px; }
.links .on { background: #ffe9b4; }
.adv label { margin-bottom: 7px; }
.three button { height: 18px; background: #b2e3da; border-radius: 3px; }
.vscroll { width: 3px; flex: none; background: #eceef0; padding-top: 2px; }
.vscroll i { display: block; height: 142px; background: #a3a9ae; border-radius: 2px; }

/* estimate sheet */
.sheet { margin-top: 2px; background: #fff; padding-top: 2px; }
.bar { display: flex; align-items: center; height: 20px; gap: 4px; padding: 0 9px 0 10px; font-size: 8px; font-weight: 500; white-space: nowrap; }
.bar button { gap: 2px; font-weight: 500; }
.bar svg { width: 10px; height: 10px; }
.bar strong { font-weight: 500; }
.bar .off { color: #b9bdc0; }
.bar button + button.off { margin-left: 3px; }
.bar input { flex: 1; height: 18px; background: #f3f3f4; border-radius: 3px; padding: 0 5px; font-size: 7px; font-weight: 400; }
.bar input::placeholder { color: #a9adb1; opacity: 1; }
.acts2 { justify-content: flex-end; gap: 10px; padding-right: 11px; }
.bar.acts2 button.off { margin-left: 0; }
.tablewrap { overflow: hidden; margin-top: 1px; }
table { border-collapse: collapse; table-layout: fixed; width: 716px; color: #33393e; }
.c32 { width: 32px; } .c63 { width: 63px; } .c64 { width: 64px; } .c82 { width: 82px; } .c95 { width: 95px; }
th { height: 26px; background: #f3f3f4; font-size: 9px; font-weight: 400; text-align: left; padding: 0 5px; border: 1px solid #dfe1e3; }
td { height: 25px; padding: 0 6px; border: solid #e3e5e7; border-width: 0 1px; font-size: 8px; }
th div { display: flex; align-items: center; }
th svg { width: 9px; height: 9px; margin-left: 5px; }
th svg.sort { width: 5px; height: 5px; margin-left: auto; color: #7a8085; }
td.num { text-align: right; }
.stat { display: flex; justify-content: space-between; align-items: center; }
.stat svg { margin-right: -2px; }
th input, td input { appearance: none; display: block; width: 8px; height: 8px; margin: 0 auto; border: 1px solid #dcdfe1; border-radius: 50%; background: #fff; }
.hscroll.low { background: #eff1f4; }
.hscroll.low i { height: 3px; width: 57%; max-width: none; }
```
